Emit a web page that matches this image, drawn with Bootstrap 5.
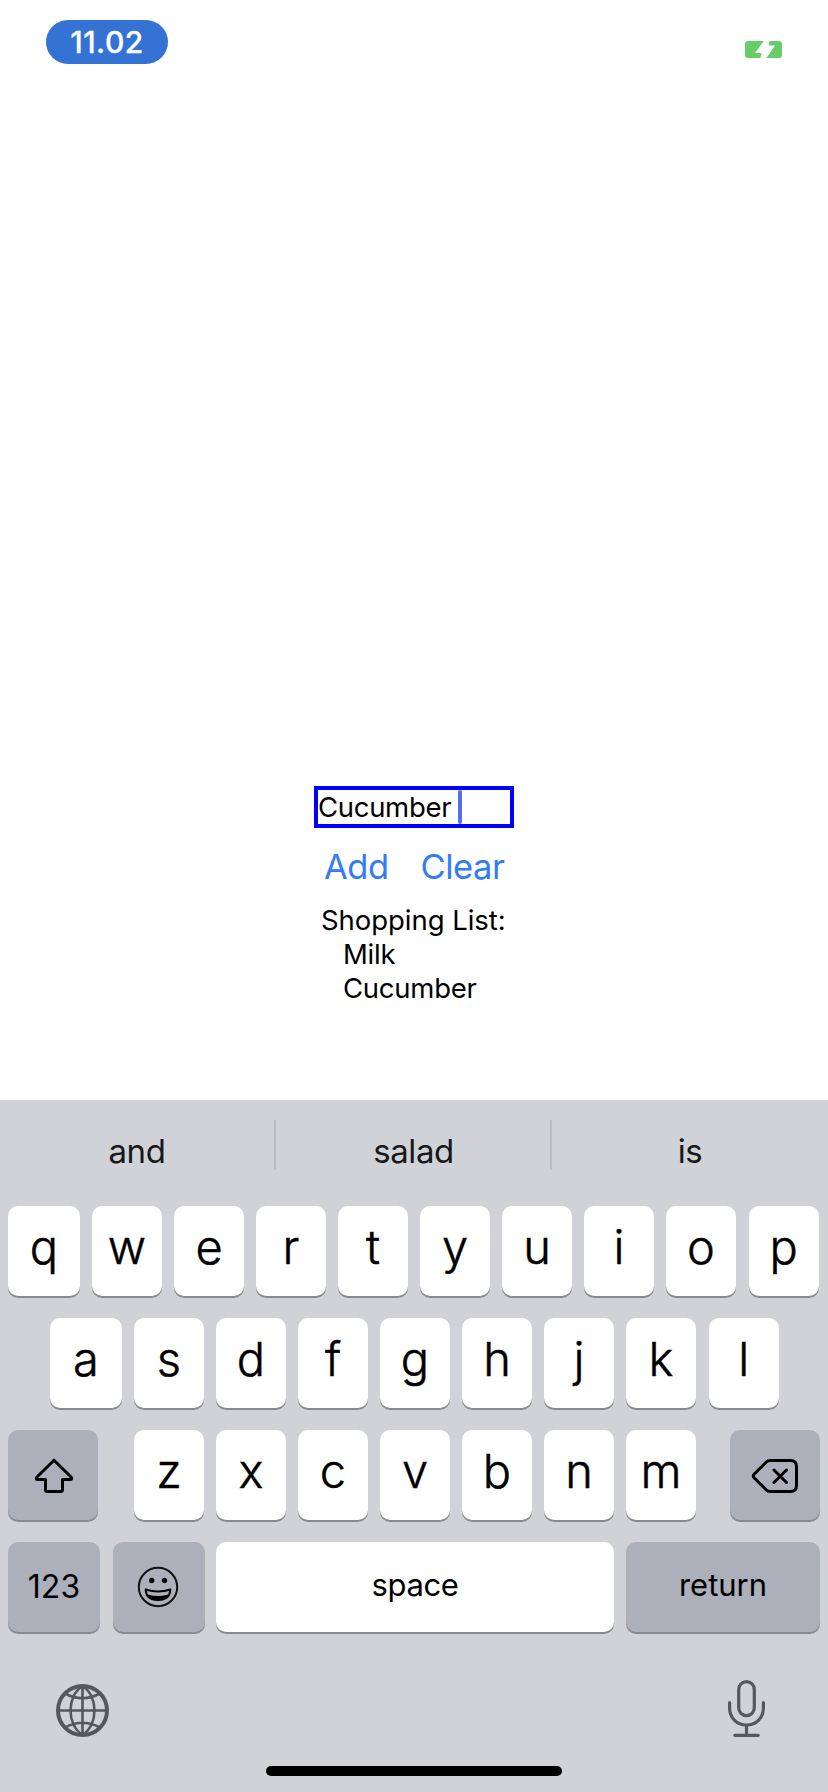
<!DOCTYPE html>
<html lang="en">
<head>
<meta charset="utf-8">
<meta name="viewport" content="width=device-width, initial-scale=1">
<title>Shopping List</title>
<link href="https://cdn.jsdelivr.net/npm/bootstrap@5.3.0/dist/css/bootstrap.min.css" rel="stylesheet">
<style>
  body { font-family: Inter, "Liberation Sans", sans-serif; color: #000; background: #fff; }
  .phone { width: 828px; height: 1792px; }
  .status { padding: 20px 46px 0; }
  .clock { width: 122px; height: 44px; border-radius: 22px; background: #3472d4; color: #fff; font-size: 30px; font-weight: 500; line-height: 45px; letter-spacing: .5px; -webkit-text-stroke: .3px #fff; }
  .battery { margin-top: 21px; display: block; }
  .shop { width: 200px; margin-bottom: 95px; font-size: 27.5px; line-height: 34px; }
  .entry { height: 42px; border: 4px solid #00f; letter-spacing: -.3px; }
  .caret { width: 4px; height: 34px; border-radius: 2px; background: #526ff0; margin-left: 7px; }
  .actions { margin-top: 17.5px; padding-left: 10px; gap: 32px; height: 57.5px; }
  .act { font-size: 34.5px; line-height: 42px; color: #347cf6; letter-spacing: -.5px; }
  .heading { padding-left: 7px; letter-spacing: -.05px; }
  .item { padding-left: 29px; letter-spacing: -.25px; }
  .keyboard { height: 692px; background: #d1d2d8; }
  .suggest { height: 106px; font-size: 33px; line-height: 102px; color: #171819; letter-spacing: -.4px; }
  .rule { width: 2px; height: 50px; margin-top: 20px; background: #bbbcc2; }
  .keys { gap: 22px; }
  .krow { height: 90px; gap: 12px; }
  .keycap { height: 90px; width: 70px; flex: none; border: 0; padding: 0; border-radius: 10px; background: #fff; box-shadow: 0 2px 0 #898a8d; color: #000; font-size: 47px; font-weight: 300; line-height: 82px; text-align: center; -webkit-text-stroke: .5px #000; }
  .keycap.first { width: 72px; }
  .keycap.gray { background: #abb0bb; }
  .keycap.word { font-size: 31px; font-weight: 400; line-height: 86px; -webkit-text-stroke: 0; }
  .tools { height: 134px; padding: 48px 63px 0 56px; }
  .homebar { width: 296px; height: 10px; border-radius: 5px; background: #000; }
  svg { display: block; }
</style>
</head>
<body>
<div class="phone d-flex flex-column overflow-hidden">
  <header class="status d-flex justify-content-between align-items-start">
    <div class="clock text-center">11.02</div>
    <svg class="battery" width="37" height="17" viewBox="0 0 37 17"><path fill="#67ce67" d="M3 0H18.800L10 12H16.500L15.500 17H3Q0 17 0 14V3Q0 0 3 0ZM24.500 0H34Q37 0 37 3V14Q37 17 34 17H21.500L30 4.500H23.800Z"/></svg>
  </header>

  <main class="flex-grow-1 d-flex flex-column justify-content-end align-items-center">
    <div class="shop text-nowrap">
      <div class="entry d-flex"><span>Cucumber</span><span class="caret"></span></div>
      <div class="actions d-flex"><a class="act text-decoration-none">Add</a><a class="act text-decoration-none">Clear</a></div>
      <div class="heading">Shopping List:</div>
      <div class="item">Milk</div>
      <div class="item">Cucumber</div>
    </div>
  </main>

  <section class="keyboard d-flex flex-column flex-shrink-0">
    <div class="suggest d-flex text-center">
      <div style="width:274px">and</div><div class="rule"></div>
      <div style="width:274px;padding-left:1px">salad</div><div class="rule"></div>
      <div style="width:276px">is</div>
    </div>
    <div class="keys d-flex flex-column">
      <div class="krow d-flex" style="padding-left:8px">
        <div class="keycap first">q</div><div class="keycap">w</div><div class="keycap">e</div><div class="keycap">r</div><div class="keycap">t</div><div class="keycap">y</div><div class="keycap">u</div><div class="keycap">i</div><div class="keycap">o</div><div class="keycap" style="margin-left:.7px">p</div>
      </div>
      <div class="krow d-flex" style="padding-left:50px">
        <div class="keycap first">a</div><div class="keycap">s</div><div class="keycap">d</div><div class="keycap">f</div><div class="keycap">g</div><div class="keycap">h</div><div class="keycap">j</div><div class="keycap">k</div><div class="keycap" style="margin-left:.7px">l</div>
      </div>
      <div class="krow d-flex" style="padding-left:8px">
        <div class="keycap gray" style="width:90px;margin-right:24px">
          <svg width="90" height="90" viewBox="0 0 90 90" fill="none" stroke="#000" stroke-width="3" stroke-linejoin="round"><path d="M46 30.200L63.300 47.200Q64.200 49.500 62.500 49.500H54.500V59.500Q54.500 61.500 52.500 61.500H39.500Q37.500 61.500 37.500 59.500V49.500H29.500Q27.800 49.500 28.700 47.200Z"/></svg>
        </div>
        <div class="keycap">z</div><div class="keycap">x</div><div class="keycap">c</div><div class="keycap">v</div><div class="keycap">b</div><div class="keycap">n</div><div class="keycap">m</div>
        <div class="keycap gray" style="width:90px;margin-left:22px">
          <svg width="90" height="90" viewBox="0 0 90 90" fill="none" stroke="#000" stroke-width="3" stroke-linecap="round" stroke-linejoin="round"><path d="M40.500 30.500H60.500Q66.500 30.500 66.500 36.500V55.500Q66.500 61.500 60.500 61.500H40.500Q37.800 61.500 36 59.700L24.300 48Q22.300 46 24.300 44L36 32.300Q37.800 30.500 40.500 30.500ZM44 40L56.500 52.500M56.500 40L44 52.500"/></svg>
        </div>
      </div>
      <div class="krow d-flex" style="padding-left:8px">
        <div class="keycap gray word" style="width:92px;font-size:32px;line-height:90px">123</div>
        <div class="keycap gray" style="width:92px;margin-left:.7px">
          <svg width="92" height="90" viewBox="0 0 92 90" fill="none"><circle cx="45" cy="45" r="19.200" stroke="#111" stroke-width="2"/><circle cx="38.700" cy="38.500" r="2.700" fill="#000"/><circle cx="51.500" cy="38.500" r="2.700" fill="#000"/><path d="M32.700 47.500Q45 51.500 57.300 47.500Q57 58 45 58Q33 58 32.700 47.500Z" stroke="#000" stroke-width="2" stroke-linejoin="round"/><path d="M35 52.500Q45 55.500 55 52.500Q53 58 45 58Q37 58 35 52.500Z" fill="#000"/></svg>
        </div>
        <div class="keycap word" style="width:398px;margin-left:-.7px;letter-spacing:-.4px">space</div>
        <div class="keycap gray word" style="width:194px">return</div>
      </div>
    </div>
    <div class="tools d-flex justify-content-between">
      <svg width="53" height="61" viewBox="0 0 53 61" fill="none" stroke="#54585d"><circle cx="26.500" cy="30.500" r="24.500" stroke-width="4"/><path stroke-width="2.600" d="M26.500 6V55M2 30.500H51M9 13.500Q26.500 23 44 13.500M9 47.500Q26.500 38 44 47.500M26.500 6C10.500 16 10.500 45 26.500 55M26.500 6C42.500 16 42.500 45 26.500 55"/></svg>
      <svg width="37" height="57" viewBox="0 0 37 57" fill="none" stroke="#54585d" stroke-width="3.200" stroke-linecap="round"><rect x="10.700" y="1.600" width="15.600" height="34" rx="7.800"/><path d="M1.600 22.500V28C1.600 37.500 8.500 45 18.500 45S35.400 37.500 35.400 28V22.500M18.500 45V55M6.800 55.300H30.200"/></svg>
    </div>
    <div class="homebar mx-auto"></div>
  </section>
</div>
<script src="https://cdn.jsdelivr.net/npm/bootstrap@5.3.0/dist/js/bootstrap.bundle.min.js"></script>
</body>
</html>
